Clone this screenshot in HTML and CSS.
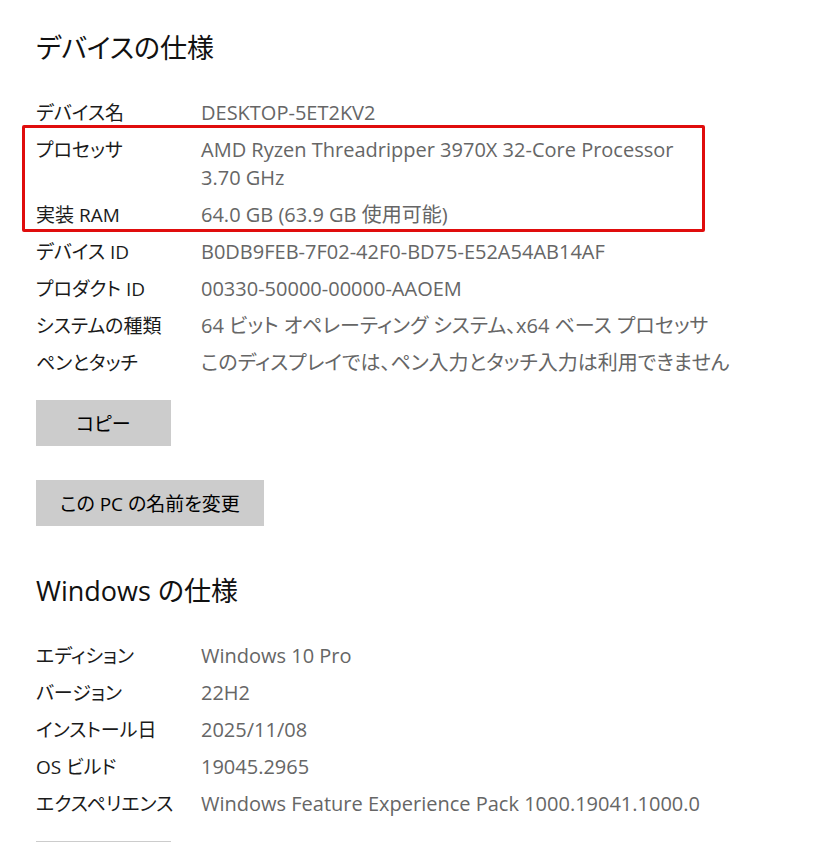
FILE: index.html
```html
<!DOCTYPE html>
<html lang="ja">
<head>
    <meta charset="UTF-8">
    <title>バージョン情報</title>
    <link rel="stylesheet" href="styles.css">
</head>
<body>
    <div class="about">
        <section class="spec">
            <h2 class="spec-title">デバイスの仕様</h2>
            <div class="spec-list">
                <div class="spec-row">
                    <span class="spec-label">デバイス名</span>
                    <span class="spec-value">DESKTOP-5ET2KV2</span>
                </div>
                <div class="highlight">
                    <div class="spec-row">
                        <span class="spec-label">プロセッサ</span>
                        <span class="spec-value">AMD Ryzen Threadripper 3970X 32-Core Processor<br>3.70 GHz</span>
                    </div>
                    <div class="spec-row">
                        <span class="spec-label">実装 RAM</span>
                        <span class="spec-value">64.0 GB (63.9 GB 使用可能)</span>
                    </div>
                </div>
                <div class="spec-row">
                    <span class="spec-label">デバイス ID</span>
                    <span class="spec-value">B0DB9FEB-7F02-42F0-BD75-E52A54AB14AF</span>
                </div>
                <div class="spec-row">
                    <span class="spec-label">プロダクト ID</span>
                    <span class="spec-value">00330-50000-00000-AAOEM</span>
                </div>
                <div class="spec-row">
                    <span class="spec-label">システムの種類</span>
                    <span class="spec-value">64 ビット オペレーティング システム、x64 ベース プロセッサ</span>
                </div>
                <div class="spec-row">
                    <span class="spec-label">ペンとタッチ</span>
                    <span class="spec-value">このディスプレイでは、ペン入力とタッチ入力は利用できません</span>
                </div>
            </div>
            <div class="actions">
                <button class="action-button">コピー</button>
                <button class="action-button">この PC の名前を変更</button>
            </div>
        </section>

        <section class="spec">
            <h2 class="spec-title">Windows の仕様</h2>
            <div class="spec-list">
                <div class="spec-row">
                    <span class="spec-label">エディション</span>
                    <span class="spec-value">Windows 10 Pro</span>
                </div>
                <div class="spec-row">
                    <span class="spec-label">バージョン</span>
                    <span class="spec-value">22H2</span>
                </div>
                <div class="spec-row">
                    <span class="spec-label">インストール日</span>
                    <span class="spec-value">2025/11/08</span>
                </div>
                <div class="spec-row">
                    <span class="spec-label">OS ビルド</span>
                    <span class="spec-value">19045.2965</span>
                </div>
                <div class="spec-row">
                    <span class="spec-label">エクスペリエンス</span>
                    <span class="spec-value">Windows Feature Experience Pack 1000.19041.1000.0</span>
                </div>
            </div>
            <div class="actions">
                <button class="action-button">コピー</button>
            </div>
        </section>
    </div>
</body>
</html>
```

FILE: styles.css
```css
body {
    margin: 0;
    background: #fff;
    color: #1b1b1b;
    font-family: "Open Sans", "Noto Sans CJK JP", sans-serif;
    font-feature-settings: "palt";
}

.about {
    padding: 29px 0 0 36px;
}

.spec {
    margin-bottom: 46px;
}

.spec-title {
    margin: 0 0 32px 0;
    font-size: 27px;
    font-weight: 400;
    line-height: 38px;
    color: #111;
}

.spec-list {
    display: flex;
    flex-direction: column;
    gap: 9px;
}

.spec-row {
    display: flex;
    font-size: 19px;
    line-height: 28px;
}

.spec-label {
    width: 165px;
    flex-shrink: 0;
    color: #1b1b1b;
}

.spec-value {
    font-size: 20px;
    color: #666;
    white-space: nowrap;
}

.highlight {
    display: flex;
    flex-direction: column;
    gap: 9px;
    width: 683px;
    box-sizing: border-box;
    margin: -11px 0 -3px -14px;
    padding: 8px 0 0 11px;
    border: 3px solid #e00d0d;
    border-radius: 2px;
}

.actions {
    display: flex;
    flex-direction: column;
    align-items: flex-start;
    gap: 34px;
    margin-top: 23px;
}

.action-button {
    min-width: 135px;
    height: 46px;
    padding: 0 24px;
    border: none;
    background: #cccccc;
    color: #000;
    font-family: inherit;
    font-feature-settings: "palt";
    font-size: 19px;
}
```
